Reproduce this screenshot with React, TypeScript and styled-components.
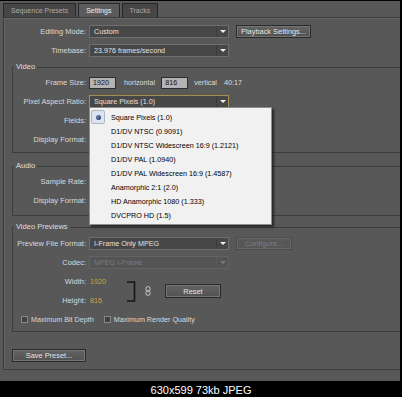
import React from "react";
import styled, { createGlobalStyle } from "styled-components";

const GlobalStyle = createGlobalStyle`
  html, body {
    margin: 0;
    padding: 0;
    background: #000;
  }
  body {
    width: 402px;
    height: 397px;
    overflow: hidden;
    font-family: "Liberation Sans", Arial, sans-serif;
  }
`;

const Screen = styled.div`
  width: 402px;
  height: 397px;
  display: flex;
  flex-direction: column;
  background: #000;
`;

const Dialog = styled.div`
  margin: 1px 2px 0 0;
  height: 380px;
  background: #585858;
  display: flex;
  flex-direction: column;
  overflow: hidden;
`;

const TabBar = styled.div`
  height: 16px;
  padding-left: 3px;
  display: flex;
  align-items: flex-end;
  gap: 2px;
  box-sizing: border-box;
`;

const Tab = styled.div<{ $active?: boolean }>`
  height: 14px;
  padding: 0 7px;
  box-sizing: border-box;
  border: 1px solid #262626;
  border-bottom: none;
  background: ${(p) => (p.$active ? "#5b5b5b" : "#464646")};
  color: ${(p) => (p.$active ? "#f2f2f2" : "#a9a9a9")};
  font-size: 7px;
  line-height: 13px;
  white-space: nowrap;
`;

const Panel = styled.div`
  margin-left: 3px;
  height: 353px;
  box-sizing: border-box;
  border: 1px solid #3b3b3b;
  border-right: none;
  box-shadow: inset 1px 1px 0 #656565;
  padding-top: 7px;
  display: flex;
  flex-direction: column;
  gap: 6px;
`;

const Row = styled.div`
  display: flex;
  align-items: center;
  height: 13px;
`;

const Label = styled.span<{ $width: number }>`
  width: ${(p) => p.$width}px;
  margin-right: 3px;
  text-align: right;
  font-size: 7.5px;
  color: #d9d9d9;
  white-space: nowrap;
`;

const Text = styled.span<{ $gap?: number }>`
  margin-left: ${(p) => p.$gap ?? 0}px;
  font-size: 7.2px;
  color: #dcdcdc;
  white-space: nowrap;
`;

const Select = styled.div<{ $focused?: boolean; $disabled?: boolean }>`
  position: relative;
  width: 140px;
  height: 13px;
  box-sizing: border-box;
  display: flex;
  border: 1px solid
    ${(p) => (p.$focused ? "#a58f4e" : p.$disabled ? "#636363" : "#6e6e6e")};
  background: ${(p) => (p.$disabled ? "#545454" : "#474747")};
  color: ${(p) => (p.$disabled ? "#7b7b7b" : "#e2e2e2")};
  font-size: 7.2px;
`;

const SelectText = styled.span`
  flex: 1;
  padding-left: 4px;
  line-height: 11px;
  white-space: nowrap;
  overflow: hidden;
`;

const ArrowBox = styled.span<{ $disabled?: boolean }>`
  width: 11px;
  display: flex;
  align-items: center;
  justify-content: center;
  border-left: 1px solid ${(p) => (p.$disabled ? "#5a5a5a" : "#3c3c3c")};
  &::after {
    content: "";
    border-left: 3px solid transparent;
    border-right: 3px solid transparent;
    border-top: 3px solid ${(p) => (p.$disabled ? "#7a7a7a" : "#f0f0f0")};
  }
`;

const Button = styled.button<{ $width: number; $height?: number; $gap?: number; $disabled?: boolean }>`
  width: ${(p) => p.$width}px;
  height: ${(p) => p.$height ?? 13}px;
  margin: 0 0 0 ${(p) => p.$gap ?? 0}px;
  padding: 0;
  box-sizing: border-box;
  border: 1px solid ${(p) => (p.$disabled ? "#4d4d4d" : "#2a2a2a")};
  background: ${(p) =>
    p.$disabled ? "#575757" : "linear-gradient(#636363, #525252)"};
  box-shadow: inset 0 0 0 1px ${(p) => (p.$disabled ? "#666" : "#747474")};
  color: ${(p) => (p.$disabled ? "#7c7c7c" : "#e4e4e4")};
  font-family: "Liberation Sans", Arial, sans-serif;
  font-size: 7.4px;
  line-height: 11px;
  white-space: nowrap;
`;

const NumBox = styled.span<{ $gap?: number }>`
  width: 27px;
  height: 12px;
  margin-left: ${(p) => p.$gap ?? 0}px;
  box-sizing: border-box;
  border: 1px solid #2e2e2e;
  background: #b3b3b3;
  color: #141414;
  font-size: 7.2px;
  line-height: 10px;
  padding-left: 3px;
`;

const Group = styled.fieldset<{ $top: number; $bottom: number }>`
  margin: ${(p) => p.$top}px -20px 0 8px;
  padding: 4px 0 ${(p) => p.$bottom}px 0;
  min-width: 0;
  border: 1px solid #3d3d3d;
  display: flex;
  flex-direction: column;
  gap: 6px;
`;

const Legend = styled.legend`
  margin-left: 1px;
  padding: 0 2px;
  font-size: 7.5px;
  line-height: 10px;
  color: #dedede;
`;

const Menu = styled.div`
  position: absolute;
  top: 100%;
  left: -1px;
  z-index: 5;
  width: 183px;
  box-sizing: border-box;
  padding: 2px 0;
  border: 1px solid #8e8e8e;
  background: #f1f1f1;
  box-shadow: 2px 2px 2px rgba(0, 0, 0, 0.55);
`;

const MenuItem = styled.div`
  height: 14px;
  display: flex;
  align-items: center;
  color: #000;
  font-size: 7.2px;
  white-space: nowrap;
`;

const CheckCell = styled.span<{ $checked?: boolean }>`
  width: 14px;
  height: 14px;
  margin: 0 6px 0 1px;
  box-sizing: border-box;
  display: flex;
  align-items: center;
  justify-content: center;
  border: 1px solid ${(p) => (p.$checked ? "#a9b7cb" : "transparent")};
  background: ${(p) => (p.$checked ? "#dfe5ee" : "transparent")};
  border-radius: 2px;
`;

const Dot = styled.span`
  width: 5px;
  height: 5px;
  border-radius: 50%;
  background: radial-gradient(circle at 35% 35%, #6d7fb0, #1b2755);
`;

const WHBlock = styled.div`
  display: flex;
  align-items: center;
`;

const WHColumn = styled.div`
  width: 114px;
  display: flex;
  flex-direction: column;
  gap: 6px;
`;

const HotText = styled.span`
  margin-left: 1px;
  font-size: 7.2px;
  color: #c9a343;
`;

const CheckRow = styled.div`
  display: flex;
  align-items: center;
  gap: 10px;
  height: 13px;
  padding-left: 8px;
`;

const CheckLabel = styled.label`
  display: flex;
  align-items: center;
  gap: 3px;
  font-size: 7.2px;
  color: #d9d9d9;
  white-space: nowrap;
`;

const Box = styled.span`
  width: 7px;
  height: 7px;
  box-sizing: border-box;
  border: 1px solid #888;
  background: #404040;
`;

const SaveRow = styled.div`
  margin-top: 11px;
  padding-left: 8px;
  display: flex;
`;

const Caption = styled.div`
  flex: 1;
  display: flex;
  align-items: center;
  justify-content: center;
  color: #fff;
  font-size: 11px;
  padding-top: 1px;
`;

const parOptions = [
  "Square Pixels (1.0)",
  "D1/DV NTSC (0.9091)",
  "D1/DV NTSC Widescreen 16:9 (1.2121)",
  "D1/DV PAL (1.0940)",
  "D1/DV PAL Widescreen 16:9 (1.4587)",
  "Anamorphic 2:1 (2.0)",
  "HD Anamorphic 1080 (1.333)",
  "DVCPRO HD (1.5)",
];

// dropdowns sitting under the open menu keep an empty face
const Dropdown: React.FC<{
  value?: string;
  focused?: boolean;
  disabled?: boolean;
  children?: React.ReactNode;
}> = ({ value, focused, disabled, children }) => (
  <Select $focused={focused} $disabled={disabled}>
    <SelectText>{value}</SelectText>
    <ArrowBox $disabled={disabled} />
    {children}
  </Select>
);

const App: React.FC = () => {
  return (
    <Screen>
      <GlobalStyle />
      <Dialog>
        <TabBar>
          <Tab>Sequence Presets</Tab>
          <Tab $active>Settings</Tab>
          <Tab>Tracks</Tab>
        </TabBar>
        <Panel>
          <Row>
            <Label $width={82}>Editing Mode:</Label>
            <Dropdown value="Custom" />
            <Button $width={75} $gap={7}>
              Playback Settings...
            </Button>
          </Row>
          <Row>
            <Label $width={82}>Timebase:</Label>
            <Dropdown value="23.976 frames/second" />
          </Row>

          <Group $top={-1} $bottom={6}>
            <Legend>Video</Legend>
            <Row>
              <Label $width={73}>Frame Size:</Label>
              <NumBox>1920</NumBox>
              <Text $gap={8}>horizontal</Text>
              <NumBox $gap={6}>816</NumBox>
              <Text $gap={6}>vertical</Text>
              <Text $gap={7}>40:17</Text>
            </Row>
            <Row>
              <Label $width={73}>Pixel Aspect Ratio:</Label>
              <Dropdown value="Square Pixels (1.0)" focused>
                <Menu>
                  {parOptions.map((o, i) => (
                    <MenuItem key={o}>
                      <CheckCell $checked={i === 0}>{i === 0 && <Dot />}</CheckCell>
                      {o}
                    </MenuItem>
                  ))}
                </Menu>
              </Dropdown>
            </Row>
            <Row>
              <Label $width={73}>Fields:</Label>
              <Dropdown />
            </Row>
            <Row>
              <Label $width={73}>Display Format:</Label>
              <Dropdown />
            </Row>
          </Group>

          <Group $top={2} $bottom={8}>
            <Legend>Audio</Legend>
            <Row>
              <Label $width={73}>Sample Rate:</Label>
              <Dropdown />
            </Row>
            <Row>
              <Label $width={73}>Display Format:</Label>
              <Dropdown />
            </Row>
          </Group>

          <Group $top={0} $bottom={5}>
            <Legend>Video Previews</Legend>
            <Row style={{ marginTop: 1 }}>
              <Label $width={73}>Preview File Format:</Label>
              <Dropdown value="I-Frame Only MPEG" />
              <Button $width={56} $gap={7} $disabled>
                Configure...
              </Button>
            </Row>
            <Row>
              <Label $width={73}>Codec:</Label>
              <Dropdown value="MPEG I-Frame" disabled />
            </Row>
            <WHBlock>
              <WHColumn>
                <Row>
                  <Label $width={73}>Width:</Label>
                  <HotText>1920</HotText>
                </Row>
                <Row>
                  <Label $width={73}>Height:</Label>
                  <HotText>816</HotText>
                </Row>
              </WHColumn>
              <svg width="10" height="21" viewBox="0 0 10 21">
                <path d="M0 1 H7.5 V20 H0" fill="none" stroke="#141414" strokeWidth="1.6" />
              </svg>
              <svg width="6" height="10" viewBox="0 0 6 10" style={{ marginLeft: 8 }}>
                <rect x="1" y="0.6" width="4" height="4.6" rx="1.8" fill="none" stroke="#d4d4d4" strokeWidth="0.9" />
                <rect x="1" y="4.8" width="4" height="4.6" rx="1.8" fill="none" stroke="#d4d4d4" strokeWidth="0.9" />
              </svg>
              <Button $width={56} $height={14} $gap={14}>
                Reset
              </Button>
            </WHBlock>
            <CheckRow>
              <CheckLabel>
                <Box />
                Maximum Bit Depth
              </CheckLabel>
              <CheckLabel>
                <Box />
                Maximum Render Quality
              </CheckLabel>
            </CheckRow>
          </Group>

          <SaveRow>
            <Button $width={74}>Save Preset...</Button>
          </SaveRow>
        </Panel>
      </Dialog>
      <Caption>630x599 73kb JPEG</Caption>
    </Screen>
  );
};

export default App;
